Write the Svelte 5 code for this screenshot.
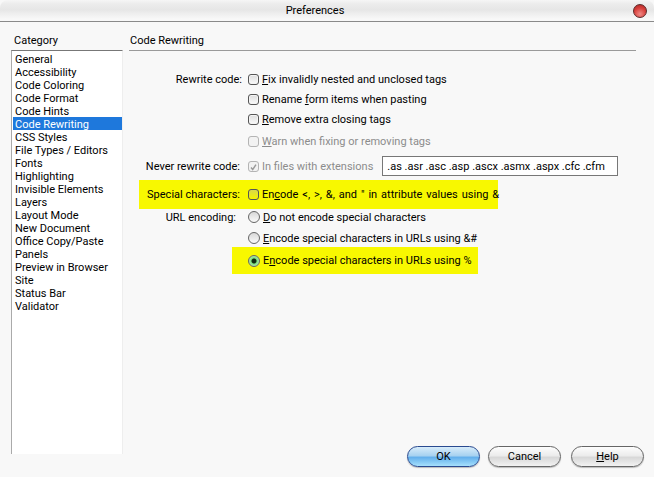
<script>
	const categories = [
		'General', 'Accessibility', 'Code Coloring', 'Code Format', 'Code Hints', 'Code Rewriting',
		'CSS Styles', 'File Types / Editors', 'Fonts', 'Highlighting', 'Invisible Elements', 'Layers',
		'Layout Mode', 'New Document', 'Office Copy/Paste', 'Panels', 'Preview in Browser', 'Site',
		'Status Bar', 'Validator'
	];
	const selected = 'Code Rewriting';
</script>

<div class="window">
	<header class="titlebar">
		<span class="title">Preferences</span>
		<span class="close"></span>
	</header>

	<div class="body">
		<aside class="category">
			<div class="heading">Category</div>
			<ul class="list">
				{#each categories as item}
					<li class:selected={item === selected}>{item}</li>
				{/each}
			</ul>
		</aside>

		<main class="panel">
			<div class="heading rule">Code Rewriting</div>
			<div class="form">
				<div class="row r20">
					<span class="label">Rewrite code:</span>
					<label><span class="check"></span><span><u>F</u>ix invalidly nested and unclosed tags</span></label>
				</div>
				<div class="row r20">
					<span class="label"></span>
					<label><span class="check"></span><span>Rename <u>f</u>orm items when pasting</span></label>
				</div>
				<div class="row r20">
					<span class="label"></span>
					<label><span class="check"></span><span><u>R</u>emove extra closing tags</span></label>
				</div>
				<div class="row r24 off">
					<span class="label"></span>
					<label><span class="check"></span><span><u>W</u>arn when fixing or removing tags</span></label>
				</div>
				<div class="row r26">
					<span class="label nudge">Never rewrite code:</span>
					<label class="off"><span class="check ticked"><svg viewBox="0 0 11 11" width="11" height="11"><path d="M2.5 5.5 L4.5 8 L8.5 2" fill="none" stroke="#9a9a9a" stroke-width="1.8"/></svg></span><span>In files with extensions</span></label>
					<input class="exts" value=".as .asr .asc .asp .ascx .asmx .aspx .cfc .cfm" readonly />
				</div>
				<div class="row special">
					<div class="mark mark-wide">
						<span class="label nudge">Special characters:</span>
						<label><span class="check tinted"></span><span class="spaced">En<u>c</u>ode &lt;, &gt;, &amp;, and " in attribute values using &amp;</span></label>
					</div>
				</div>
				<div class="row r22">
					<span class="label nudge-more">URL encoding:</span>
					<label><span class="radio"></span><span><u>D</u>o not encode special characters</span></label>
				</div>
				<div class="row r20">
					<span class="label"></span>
					<label><span class="radio"></span><span><u>E</u>ncode special characters in URLs using &amp;#</span></label>
				</div>
				<div class="row percent">
					<span class="label"></span>
					<div class="mark mark-narrow">
						<label><span class="radio on"></span><span>E<u>n</u>code special characters in URLs using %</span></label>
					</div>
				</div>
			</div>
		</main>
	</div>

	<footer class="actions">
		<button class="primary">OK</button>
		<button>Cancel</button>
		<button class="help"><span><u>H</u>elp</span></button>
	</footer>
</div>

<style>
	:global(body) {
		background: #f8f8f8;
	}

	.window {
		width: 654px;
		height: 477px;
		display: flex;
		flex-direction: column;
		overflow: hidden;
		background: #f8f8f8;
		color: #000;
		font-family: Roboto, "Liberation Sans", sans-serif;
		font-size: 11px;
		line-height: 13px;
	}

	.titlebar {
		height: 21px;
		flex-shrink: 0;
		box-sizing: content-box;
		display: flex;
		align-items: center;
		justify-content: center;
		padding-right: 24px;
		position: relative;
		border-bottom: 1px solid #8a8a8a;
		border-radius: 8px 8px 0 0;
		background: linear-gradient(#f6f6f6 0, #ececec 4px, #e6e6e6 10px, #ededed 13px, #f8f8f8 19px);
	}

	.close {
		position: absolute;
		right: 7px;
		top: 4px;
		width: 14px;
		height: 14px;
		border-radius: 50%;
		border: 1px solid #5c2a2a;
		box-sizing: border-box;
		background: radial-gradient(circle at 50% 75%, #f08a86 0, #d8403c 55%, #a82422 100%);
	}

	.body {
		flex: 1;
		display: flex;
		min-height: 0;
	}

	.heading {
		height: 13px;
	}

	.category {
		width: 112px;
		margin: 12px 0 0 11px;
		flex-shrink: 0;
		display: flex;
		flex-direction: column;
		height: 420px;
	}

	.category .heading {
		margin: 0 0 3px 3px;
	}

	.list {
		flex: 1;
		margin: 0;
		padding: 1px 0 0 1px;
		list-style: none;
		background: #fff;
		border-top: 1px solid #777;
		border-left: 1px solid #aaa;
		border-right: 1px solid #eee;
	}

	.list li {
		height: 13px;
		line-height: 15px;
		padding-left: 2px;
		white-space: nowrap;
	}

	.list li.selected {
		background: #1e78dc;
		color: #fff;
	}

	.panel {
		width: 507px;
		margin: 12px 0 0 6px;
	}

	.rule {
		height: 16px;
		padding-left: 1px;
		border-bottom: 1px solid #9a9a9a;
		box-sizing: content-box;
		margin-bottom: 18px;
	}

	.row {
		display: flex;
		align-items: center;
		white-space: nowrap;
	}

	.r20 { height: 20px; }
	.r22 { height: 22px; }
	.r24 { height: 24px; }
	.r26 { height: 26px; }

	.special {
		height: 29px;
		margin: 1px 0 -3px;
	}

	.percent {
		height: 27px;
		margin-top: -1px;
	}

	.label {
		width: 113px;
		flex-shrink: 0;
		text-align: right;
		margin-right: 6px;
	}

	.nudge {
		padding-right: 2px;
		box-sizing: border-box;
	}

	.nudge-more {
		padding-right: 6px;
		box-sizing: border-box;
	}

	label {
		display: flex;
		align-items: center;
		gap: 3px;
	}

	.spaced {
		word-spacing: 1.2px;
	}

	.off {
		color: #8c8c8c;
	}

	.check {
		width: 11px;
		height: 11px;
		flex-shrink: 0;
		box-sizing: border-box;
		border: 1px solid #555;
		border-radius: 3px;
		background: linear-gradient(#dcdcdc, #fafafa);
		box-shadow: inset 0 0 0 1px #f4f4f4;
	}

	.off .check {
		border-color: #b4b4b4;
		background: #f2f2f2;
		box-shadow: none;
		display: flex;
	}

	.check.tinted {
		background: linear-gradient(#d8d84c, #f4f400);
		box-shadow: none;
	}

	.radio {
		width: 12px;
		height: 12px;
		flex-shrink: 0;
		box-sizing: border-box;
		border: 1px solid #666;
		border-radius: 50%;
		background: linear-gradient(#d8d8d8, #fafafa);
	}

	.radio.on {
		background: radial-gradient(circle, #102a10 0, #102a10 2px, #7ee07e 3px, #bfe8bf 6px);
	}

	.exts {
		margin-left: 9px;
		width: 236px;
		height: 20px;
		box-sizing: border-box;
		padding: 0 0 0 4px;
		border: 1px solid #777;
		background: #fff;
		font: inherit;
		color: #000;
		outline: none;
	}

	.mark {
		background: #f8f800;
		display: flex;
		align-items: center;
	}

	.mark-wide {
		margin-left: 10px;
		width: 359px;
		height: 29px;
	}

	.mark-wide .label {
		width: 103px;
	}

	.mark-narrow {
		margin-left: -16px;
		padding-left: 16px;
		width: 230px;
		height: 27px;
	}

	.actions {
		display: flex;
		justify-content: flex-end;
		gap: 8px;
		padding: 0 10px 10px 0;
	}

	button {
		width: 73px;
		height: 21px;
		padding: 0;
		font: inherit;
		color: #000;
		border: 1px solid #666;
		border-radius: 11px;
		background: linear-gradient(#fdfdfd 0, #ececec 45%, #d8d8d8 55%, #f2f2f2 100%);
		box-shadow: 0 1px 1px #bbb;
	}

	button.primary {
		border-color: #2a4a90;
		background: linear-gradient(#d8ecfa 0, #a8d2f0 45%, #64b0ec 55%, #a6e0fc 100%);
	}

	button.help {
		margin-left: 2px;
	}
</style>
